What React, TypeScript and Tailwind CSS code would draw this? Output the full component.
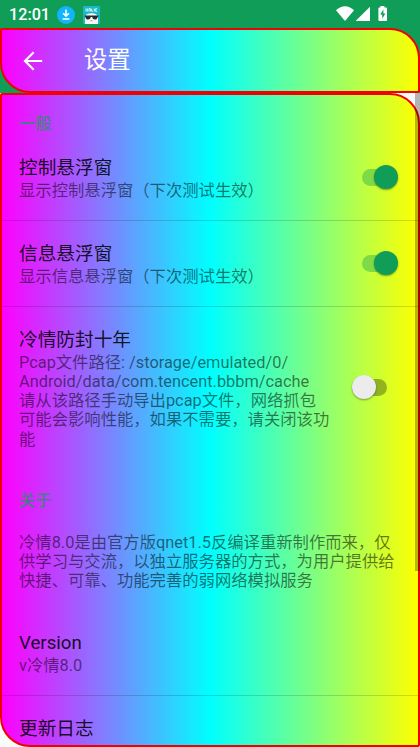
import type { ReactNode } from 'react'

function DownloadBadge() {
  return (
    <svg className="h-[18px] w-[18px]" viewBox="0 0 18 18">
      <circle cx="9" cy="9" r="9" fill="#10b5fb" />
      <path d="M9 3.6v6M6.1 7.2 9 10.1l2.9-2.9M5.6 13h6.8" fill="none" stroke="#fff" strokeWidth="1.6" />
    </svg>
  )
}

function MagicBadge() {
  return (
    <svg className="h-[18px] w-[17px]" viewBox="0 0 17 18">
      <rect width="17" height="18" rx="1" fill="#19b9c4" />
      <path d="M3 2.5v3M4.3 2.5v3M6 5.5v-3h1.3v3M8.7 2.7v2.6h1.3M11.3 2.5v3M14 2.7h-1.3v2.6H14" fill="none" stroke="#e8ffff" strokeWidth="0.9" />
      <path d="M2 18V11.5Q2.2 7.2 8.5 7.2T15 11.5V18Z" fill="#f6f6f6" />
      <path d="M1.5 9.4h14v1l-.8.3q-.4 2.8-2.8 2.8T9.2 11H7.8q-.3 2.5-2.7 2.5T2.3 10.7l-.8-.3Z" fill="#252b2e" />
      <path d="M7.5 14.8h2" stroke="#777" strokeWidth="0.7" />
    </svg>
  )
}

function StatusBar() {
  return (
    <div className="flex h-7 items-start justify-between pl-[9px] pr-[32px] pt-[5px]">
      <div className="flex items-center">
        <span className="w-[48px] pt-px text-[16.2px] font-medium leading-[18px] text-white">12:01</span>
        <DownloadBadge />
        <div className="ml-2">
          <MagicBadge />
        </div>
      </div>
      <svg className="h-[17px] w-[52px]" viewBox="0 0 52 17" fill="#fff">
        <path d="M0 5.3Q9-2.6 18 5.3L9 16Z" />
        <path d="M34 1.7V16H19.6Z" />
        <path d="M44.4 1h4v1.6h1.8q.8 0 .8.8v11.8q0 .8-.8.8h-7q-.8 0-.8-.8V3.4q0-.8.8-.8h1.2Z" />
        <path d="M47.4 4.5 44.2 9.6h2v4.2l3.2-5.3h-2Z" fill="#0f9d58" />
      </svg>
    </div>
  )
}

function Toggle({ on }: { on?: boolean }) {
  if (on) {
    return (
      <div className="relative mb-[1px] h-[17px] w-9 shrink-0">
        <div className="h-full w-[35px] rounded-full bg-[#0f9d58]/38" />
        <div className="absolute -top-[4px] right-0 h-6 w-6 rounded-full bg-[#0f9d58] shadow-[0_1px_2px_rgba(0,0,0,0.4)]" />
      </div>
    )
  }
  return (
    <div className="relative mb-[1px] mr-[11px] h-[17px] w-[35px] shrink-0">
      <div className="h-full w-[35px] rounded-full bg-black/30" />
      <div className="absolute -top-[4px] left-0 h-6 w-6 rounded-full bg-[#ececec] shadow-[0_1px_2px_rgba(0,0,0,0.4)]" />
    </div>
  )
}

function Lines({ lines }: { lines: string[] }) {
  return (
    <div className="text-[16.33px] leading-[19.1px] text-black/54">
      {lines.map((line) => (
        <p key={line} className="whitespace-nowrap">
          {line}
        </p>
      ))}
    </div>
  )
}

function Title({ children }: { children: ReactNode }) {
  return <h2 className="text-[18.67px] leading-[25px] text-black/87">{children}</h2>
}

interface SettingRowProps {
  title: string
  summary: string[]
  on?: boolean
}

function SettingRow({ title, summary, on }: SettingRowProps) {
  return (
    <div className="flex items-center justify-between pb-[20px] pl-[17px] pr-[20px] pt-[21px]">
      <div>
        <Title>{title}</Title>
        <Lines lines={summary} />
      </div>
      <Toggle on={on} />
    </div>
  )
}

function SectionLabel({ children }: { children: ReactNode }) {
  return <p className="pl-[17px] text-[16.33px] font-medium leading-5 text-[#0f9d58]/75">{children}</p>
}

function Divider() {
  return <div className="h-px bg-black/15" />
}

export default function App() {
  return (
    <div className="h-[747px] w-[420px] overflow-hidden bg-[#fafafa] font-[Roboto,'Noto_Sans_CJK_SC',sans-serif]">
      <div className="h-[93px] bg-[#0f9d58]">
        <StatusBar />
        <header className="flex h-[65px] items-center rounded-[2px_30px_2px_30px] border-2 border-[#f00000] bg-linear-to-r/srgb from-[#ff00ff] via-[#00ffff] to-[#ffff00] pl-[21px]">
          <svg className="h-5 w-5" viewBox="0 0 20 20" fill="none" stroke="#fff" strokeWidth="2.2">
            <path d="M19.2 10H2M10.7 1.3 2 10l8.7 8.7" />
          </svg>
          <h1 className="mb-[2px] ml-[41px] text-[23.33px] leading-7 text-white">设置</h1>
        </header>
      </div>

      <main className="relative h-[654px] overflow-hidden rounded-[2px_30px_2px_30px] border-2 border-[#f00000] bg-linear-to-r/srgb from-[#ff00ff] via-[#00ffff] to-[#ffff00]">
        <div className="h-[40px] pt-[19px]">
          <SectionLabel>一般</SectionLabel>
        </div>
        <SettingRow title="控制悬浮窗" summary={['显示控制悬浮窗（下次测试生效）']} on />
        <Divider />
        <SettingRow title="信息悬浮窗" summary={['显示信息悬浮窗（下次测试生效）']} on />
        <Divider />
        <SettingRow
          title="冷情防封十年"
          summary={[
            'Pcap文件路径: /storage/emulated/0/',
            'Android/data/com.tencent.bbbm/cache',
            '请从该路径手动导出pcap文件，网络抓包',
            '可能会影响性能，如果不需要，请关闭该功',
            '能',
          ]}
        />
        <div className="pt-[22px]">
          <SectionLabel>关于</SectionLabel>
        </div>
        <div className="pl-[17px] pt-[22px]">
          <Lines
            lines={[
              '冷情8.0是由官方版qnet1.5反编译重新制作而来，仅',
              '供学习与交流，以独立服务器的方式，为用户提供给',
              '快捷、可靠、功能完善的弱网络模拟服务',
            ]}
          />
        </div>
        <div className="pb-[20px] pl-[17px] pt-[41px]">
          <Title>Version</Title>
          <Lines lines={['v冷情8.0']} />
        </div>
        <Divider />
        <div className="pl-[17px] pt-[21px]">
          <Title>更新日志</Title>
        </div>
      </main>
      <div className="absolute left-[415px] top-[93px] h-[478px] w-[5px] bg-black/28" />
    </div>
  )
}
